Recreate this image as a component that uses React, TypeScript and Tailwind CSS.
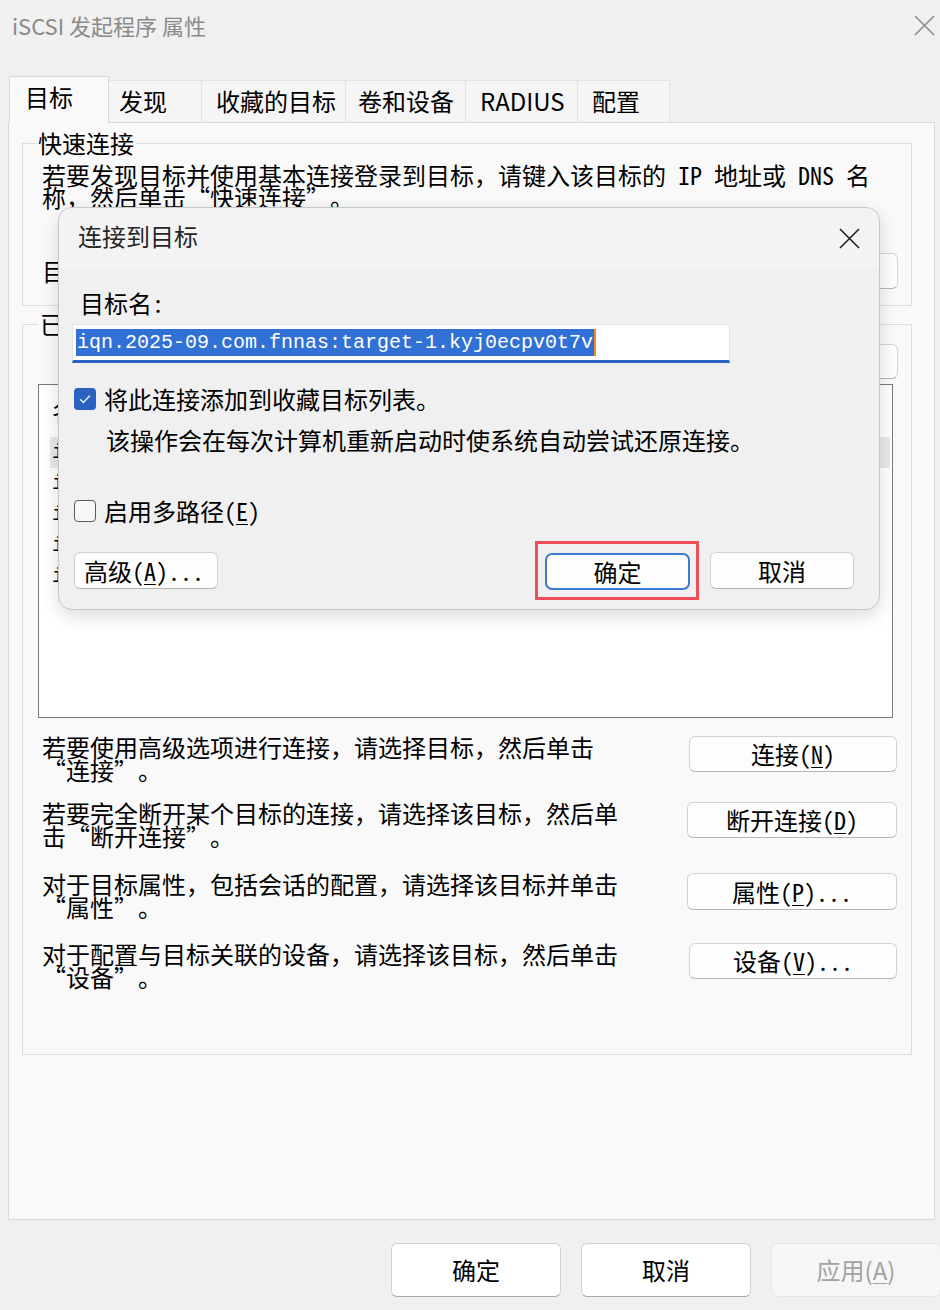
import React from "react";

const BODY = "font-['Noto_Sans_Mono_CJK_SC','Noto_Sans_CJK_SC',monospace]";
const UI = "font-['Noto_Sans_CJK_SC',sans-serif]";
const MONO = "font-['Liberation_Mono',monospace]";

function CloseX({ color, size }: { color: string; size: number }) {
  return (
    <svg width={size} height={size} viewBox="0 0 22 22" fill="none">
      <path d="M1 1L21 21M21 1L1 21" stroke={color} strokeWidth="1.6" />
    </svg>
  );
}

function U({ children }: { children: React.ReactNode }) {
  return <span className="underline underline-offset-[3px] decoration-1">{children}</span>;
}

function LQ() {
  return <span className="inline-block w-[24px] text-right">“</span>;
}
function RQ() {
  return <span className="inline-block w-[24px] text-left">”</span>;
}

function Btn({ children, className }: { children: React.ReactNode; className: string }) {
  return (
    <div
      className={
        "flex items-center justify-center rounded-[6px] border border-[#d2d2d2] border-b-[#b5b5b5] bg-[#fdfdfd] text-[24px] leading-[24px] " +
        className
      }
    >
      {children}
    </div>
  );
}

export default function App() {
  return (
    <div lang="zh-CN" className={"relative h-[1310px] w-[940px] overflow-hidden bg-[#f0f0f0] text-black " + BODY}>
      {/* title bar */}
      <div className="flex h-[50px] items-center justify-between pl-[12px] pr-[5px]">
        <span className={UI + " text-[22px] leading-[22px] text-[#8a8a8a]"}>iSCSI 发起程序 属性</span>
        <CloseX color="#8c8c8c" size={21} />
      </div>

      {/* tabs */}
      <div className={UI + " mt-[26px] flex h-[46px] items-end pl-[9px] text-[24px] leading-[24px]"}>
        <div className="relative z-10 mb-[-1px] flex h-[47px] w-[100px] items-center border border-b-0 border-[#d9d9d9] bg-[#f9f9f9] pb-[6px] pl-[15px]">
          目标
        </div>
        <div className="flex h-[42px] w-[93px] items-center border-r border-t border-[#e3e3e3] bg-[#f5f5f5] pb-[2px] pl-[10px]">发现</div>
        <div className="flex h-[42px] w-[144px] items-center border-r border-t border-[#e3e3e3] bg-[#f5f5f5] pb-[2px] pl-[14px]">收藏的目标</div>
        <div className="flex h-[42px] w-[120px] items-center border-r border-t border-[#e3e3e3] bg-[#f5f5f5] pb-[2px] pl-[12px]">卷和设备</div>
        <div className="flex h-[42px] w-[112px] items-center border-r border-t border-[#e3e3e3] bg-[#f5f5f5] pb-[2px] pl-[14px]">RADIUS</div>
        <div className="flex h-[42px] w-[92px] items-center border-r border-t border-[#e3e3e3] bg-[#f5f5f5] pb-[2px] pl-[14px]">配置</div>
      </div>

      {/* panel */}
      <div className="ml-[8px] h-[1098px] w-[927px] border border-[#d9d9d9] bg-[#f9f9f9] pl-[13px] pt-[8px]">
        {/* group 1 */}
        <fieldset className="h-[175px] w-[890px] border border-[#dcdcdc]">
          <legend className="ml-[13px] px-[2px] text-[24px] leading-[24px]">快速连接</legend>
          <div className="mt-[9px] pl-[19px] text-[24px] leading-[22px] whitespace-nowrap">
            <div>若要发现目标并使用基本连接登录到目标，请键入该目标的 IP 地址或 DNS 名</div>
            <div>
              称，然后单击<LQ />快速连接<RQ />。
            </div>
          </div>
          <div className="mt-[45px] flex h-[36px] items-center pl-[19px] pr-[13px] text-[24px] leading-[24px]">
            <span>
              目标(<U>T</U>):
            </span>
            <div className="ml-[14px] h-[32px] flex-1 border border-[#d0d0d0] border-b-[#8a8a8a] bg-white" />
            <Btn className="ml-[16px] h-[36px] w-[178px]">
              快速连接(<U>Q</U>)
            </Btn>
          </div>
        </fieldset>

        {/* group 2 */}
        <fieldset className="mt-[6px] h-[743px] w-[890px] border border-[#dcdcdc]">
          <legend className="ml-[15px] px-[2px] text-[24px] leading-[24px]">
            已发现的目标(<U>G</U>)
          </legend>
          <div className="mt-[8px] flex justify-end pr-[13px]">
            <Btn className="h-[35px] w-[144px]">
              刷新(<U>R</U>)
            </Btn>
          </div>
          <div className="ml-[15px] mt-[5px] h-[334px] w-[855px] border border-[#7a7a7a] bg-white">
            <div className="flex h-[52px] items-center pl-[13px] text-[24px] leading-[24px]">
              <span className="w-[640px]">名称</span>
              <span>状态</span>
            </div>
            {[
              ["iqn.2025-09.com.fnnas:target-1.kyj0ecpv0t7v", "不活动", true],
              ["iqn.2025-09.com.fnnas:target-2.a8x0ecpv1m2q", "不活动", false],
              ["iqn.2025-09.com.fnnas:target-3.b7k3xcpv9t1a", "不活动", false],
              ["iqn.2025-09.com.fnnas:target-4.c2m9ecpv4r8d", "不活动", false],
              ["iqn.2025-09.com.fnnas:target-5.d5p1ecpv6w3e", "不活动", false],
            ].map(([name, status, sel], i) => (
              <div
                key={i}
                className={
                  "ml-[11px] mr-[2px] flex h-[31px] items-center pl-[2px] " + (sel ? "bg-[#e9e9e9]" : "")
                }
              >
                <span className={MONO + " w-[627px] text-[20px] leading-[20px]"}>{name as string}</span>
                <span className="text-[24px] leading-[24px]">{status as string}</span>
              </div>
            ))}
          </div>

          <div className="pl-[19px] pr-[14px] text-[24px] leading-[23px]">
            <div className="mt-[17px] flex h-[46px] items-start justify-between">
              <div className="whitespace-nowrap">
                <div>若要使用高级选项进行连接，请选择目标，然后单击</div>
                <div>
                  <LQ />连接<RQ />。
                </div>
              </div>
              <Btn className="mt-[1px] h-[36px] w-[208px]">
                连接(<U>N</U>)
              </Btn>
            </div>
            <div className="mt-[20px] flex h-[46px] items-start justify-between">
              <div className="whitespace-nowrap">
                <div>若要完全断开某个目标的连接，请选择该目标，然后单</div>
                <div>
                  击<LQ />断开连接<RQ />。
                </div>
              </div>
              <Btn className="mt-[1px] h-[36px] w-[210px]">
                断开连接(<U>D</U>)
              </Btn>
            </div>
            <div className="mt-[25px] flex h-[46px] items-start justify-between">
              <div className="whitespace-nowrap">
                <div>对于目标属性，包括会话的配置，请选择该目标并单击</div>
                <div>
                  <LQ />属性<RQ />。
                </div>
              </div>
              <Btn className="mt-[1px] h-[37px] w-[210px]">
                属性(<U>P</U>)...
              </Btn>
            </div>
            <div className="mt-[24px] flex h-[46px] items-start justify-between">
              <div className="whitespace-nowrap">
                <div>对于配置与目标关联的设备，请选择该目标，然后单击</div>
                <div>
                  <LQ />设备<RQ />。
                </div>
              </div>
              <Btn className="mt-[1px] h-[36px] w-[208px]">
                设备(<U>V</U>)...
              </Btn>
            </div>
          </div>
        </fieldset>
      </div>

      {/* bottom buttons */}
      <div className={UI + " mt-[23px] flex justify-end gap-[20px] pr-0 text-[24px] leading-[24px]"}>
        <div className="flex h-[54px] w-[170px] items-center justify-center rounded-[6px] border border-[#d2d2d2] border-b-[#a9a9a9] bg-white">
          确定
        </div>
        <div className="flex h-[54px] w-[170px] items-center justify-center rounded-[6px] border border-[#d2d2d2] border-b-[#a9a9a9] bg-white">
          取消
        </div>
        <div className="mr-[-1px] flex h-[54px] w-[170px] items-center justify-center rounded-[6px] border border-[#e6e6e6] bg-[#f6f6f6] text-[#a3a3a3]">
          应用(<span className="underline underline-offset-[3px] decoration-1">A</span>)
        </div>
      </div>

      {/* dialog overlay */}
      <div className="absolute left-[58px] top-[207px] h-[403px] w-[822px] rounded-[14px] border border-[#c8c8c8] bg-[#f0f0f0] shadow-[0_6px_18px_rgba(0,0,0,0.14)]">
        <div className="flex h-[60px] items-center justify-between rounded-t-[14px] bg-[#f3f3f3] pl-[19px] pr-[19px]">
          <span className={UI + " pb-[4px] text-[24px] leading-[24px] text-[#262626]"}>连接到目标</span>
          <CloseX color="#1f1f1f" size={21} />
        </div>
        <div className="flex flex-col pl-[13px] text-[24px] leading-[24px]">
          <div className="mt-[23px] pl-[8px]">目标名:</div>
          <div className="mt-[9px] flex h-[39px] w-[658px] items-start border border-b-[3px] border-[#e3e3e3] border-b-[#2a63c4] bg-white pl-[3px] pt-[4px]">
            <span className={MONO + " h-[27px] bg-[#3170d4] px-[1px] text-[20px] leading-[27px] text-white"}>
              iqn.2025-09.com.fnnas:target-1.kyj0ecpv0t7v
            </span>
            <span className="h-[27px] w-[2px] bg-[#f08a24]" />
          </div>
          <div className="mt-[24px] flex items-center gap-[8px] pl-[2px]">
            <div className="flex h-[22px] w-[22px] items-center justify-center rounded-[4px] bg-[#2b61c1]">
              <svg width="14" height="14" viewBox="0 0 14 14" fill="none">
                <path d="M2 7.2L5.4 10.4L12 3.6" stroke="#e3ecfb" strokeWidth="1.5" />
              </svg>
            </div>
            <span>将此连接添加到收藏目标列表。</span>
          </div>
          <div className="mt-[17px] pl-[34px]">该操作会在每次计算机重新启动时使系统自动尝试还原连接。</div>
          <div className="mt-[47px] flex items-center gap-[8px] pl-[2px]">
            <div className="h-[22px] w-[22px] rounded-[4px] border-[1.5px] border-[#5b5b5b] bg-[#f7f7f7]" />
            <span>
              启用多路径(<U>E</U>)
            </span>
          </div>
          <div className="mt-[18px] flex items-center">
            <div className="ml-[2px] flex h-[37px] w-[144px] items-center rounded-[6px] border border-[#d2d2d2] border-b-[#b5b5b5] bg-[#fdfdfd] pl-[9px]">
              高级(<U>A</U>)...
            </div>
            <div className="ml-[317px] flex h-[59px] w-[164px] items-start border-[3px] border-[#f04e58] pl-[7px] pt-[9px]">
              <div className="flex h-[37px] w-[145px] items-center justify-center rounded-[7px] border-2 border-[#3b7bd6] bg-[#fdfdfd]">
                确定
              </div>
            </div>
            <div className="ml-[11px] flex h-[37px] w-[144px] items-center justify-center rounded-[6px] border border-[#d2d2d2] border-b-[#b5b5b5] bg-[#fdfdfd]">
              取消
            </div>
          </div>
        </div>
      </div>
    </div>
  );
}
